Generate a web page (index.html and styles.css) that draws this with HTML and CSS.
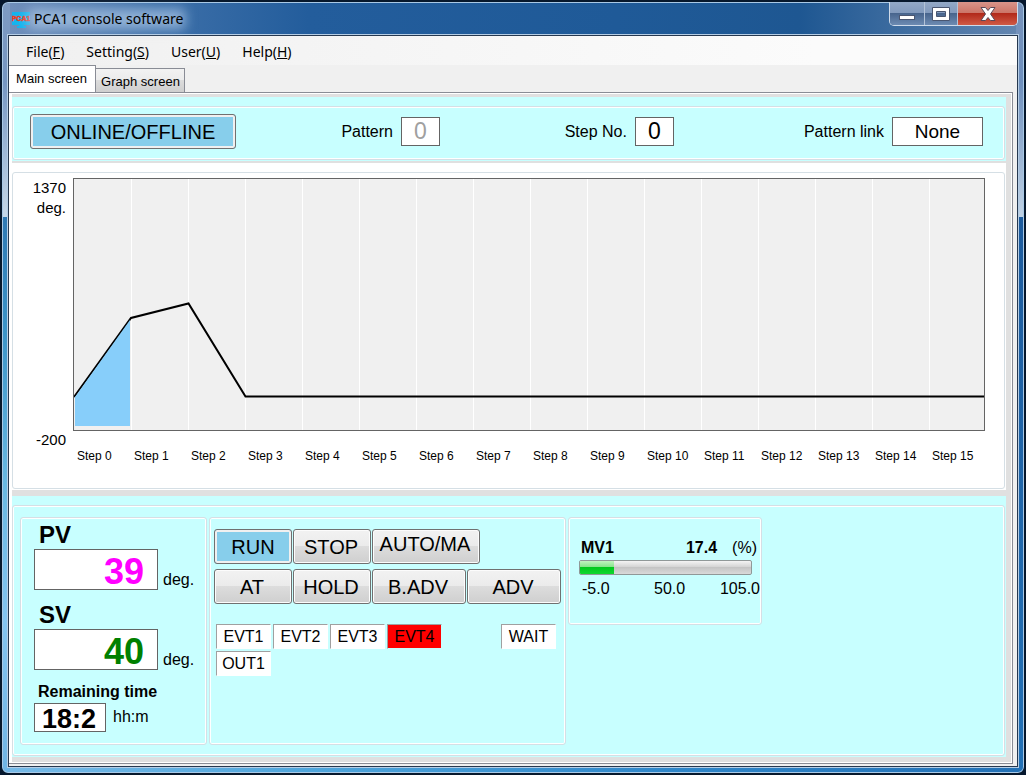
FILE: index.html
```html
<!DOCTYPE html>
<html lang="en">
<head>
<meta charset="utf-8">
<title>PCA1 console software</title>
<link rel="stylesheet" href="styles.css">
</head>
<body>
<div class="window">
  <header class="titlebar">
    <svg class="app-icon" width="18" height="16" viewBox="0 0 18 16" aria-hidden="true">
      <path d="M0 0h18v13H12v1h2v2H5v-2h2v-1H0z" fill="#14b4ee"/>
      <text x="9" y="9" text-anchor="middle" fill="#f03a20" stroke="#f03a20" stroke-width=".5">PCA1</text>
    </svg>
    <h1 class="title">PCA1 console software</h1>
    <div class="captions">
      <button class="cap cap-min" aria-label="Minimize"><svg width="18" height="14" viewBox="0 0 18 14"><rect x="1.500" y="8.500" width="15" height="4" fill="#fff" stroke="#4a5670"/></svg></button>
      <button class="cap cap-max" aria-label="Maximize"><svg width="18" height="14" viewBox="0 0 18 14"><path fill-rule="evenodd" d="M.5.500h17v13H.5zM4.500 4.500v5h9v-5z" fill="#fff" stroke="#4a5670"/></svg></button>
      <button class="cap cap-close" aria-label="Close"><svg width="16" height="14" viewBox="0 0 16 14"><path d="M1 .5h4.500L8 3.500l2.500-3H15L10.500 7l4.500 6.500h-4.500L8 10.500l-2.500 3H1L5.500 7z" fill="#fff" stroke="#5a4a58"/></svg></button>
    </div>
  </header>
  <main class="client">
    <nav class="menu">
      <button>File(<u>F</u>)</button>
      <button>Setting(<u>S</u>)</button>
      <button>User(<u>U</u>)</button>
      <button>Help(<u>H</u>)</button>
    </nav>
    <div class="tabs" role="tablist">
      <button class="tab tab-active" role="tab" aria-selected="true">Main screen</button>
      <button class="tab" role="tab" aria-selected="false">Graph screen</button>
    </div>
    <div class="page">
      <section class="panel panel-top">
        <div class="group status">
          <button class="btn btn-on btn-online">ONLINE/OFFLINE</button>
          <div class="field"><label for="pattern">Pattern</label><input id="pattern" class="box box-small" value="0" disabled></div>
          <div class="field"><label for="step">Step No.</label><input id="step" class="box box-small" value="0" readonly></div>
          <div class="field"><label for="link">Pattern link</label><input id="link" class="box box-link" value="None" readonly></div>
        </div>
      </section>
      <section class="panel panel-chart">
        <div class="group chart">
          <div class="axis"><div><p>1370</p><p>deg.</p></div><p>-200</p></div>
          <svg class="plot" viewBox="0 0 912 253" preserveAspectRatio="none" role="img" aria-label="Pattern profile">
            <rect width="912" height="253" fill="#f0f0f0"/>
            <path d="M58.500 0v253M115.500 0v253M172.500 0v253M229.500 0v253M286.500 0v253M343.500 0v253M400.500 0v253M457.500 0v253M514.500 0v253M571.500 0v253M628.500 0v253M685.500 0v253M742.500 0v253M799.500 0v253M856.500 0v253" stroke="#fff" fill="none"/>
            <path d="M1 219L58 140L115.500 125.500L172.500 218.500H911" fill="none" stroke="#000" stroke-width="2"/>
            <path d="M2 219L57 142V248H2z" fill="#87cefa"/>
            <rect x=".5" y=".5" width="911" height="252" fill="none" stroke="#646464"/>
          </svg>
          <div class="steps">
            <span>Step 0</span><span>Step 1</span><span>Step 2</span><span>Step 3</span><span>Step 4</span><span>Step 5</span><span>Step 6</span><span>Step 7</span><span>Step 8</span><span>Step 9</span><span>Step 10</span><span>Step 11</span><span>Step 12</span><span>Step 13</span><span>Step 14</span><span>Step 15</span>
          </div>
        </div>
      </section>
      <section class="panel panel-bottom">
        <div class="group controls">
          <div class="group values">
            <label class="big" for="pv">PV</label>
            <div class="reading"><input id="pv" class="box box-value pv" value="39" readonly><span>deg.</span></div>
            <label class="big" for="sv">SV</label>
            <div class="reading"><input id="sv" class="box box-value sv" value="40" readonly><span>deg.</span></div>
            <label class="remain" for="rt">Remaining time</label>
            <div class="reading reading-time"><input id="rt" class="box box-time" value="18:2" readonly><span>hh:m</span></div>
          </div>
          <div class="group commands">
            <div class="row"><button class="btn btn-on">RUN</button><button class="btn">STOP</button><button class="btn btn-auto">AUTO/MA</button></div>
            <div class="row"><button class="btn">AT</button><button class="btn">HOLD</button><button class="btn btn-wide">B.ADV</button><button class="btn btn-wide">ADV</button></div>
            <div class="lamps">
              <span class="lamp">EVT1</span><span class="lamp">EVT2</span><span class="lamp">EVT3</span><span class="lamp lamp-on">EVT4</span><span class="lamp lamp-wait">WAIT</span><span class="lamp">OUT1</span>
            </div>
          </div>
          <div class="group output">
            <div class="mv"><b>MV1</b><b class="mv-value">17.4</b><span>(%)</span></div>
            <div class="bar" role="progressbar" aria-label="MV1" aria-valuemin="-5" aria-valuemax="105" aria-valuenow="17.4"><div class="bar-fill" style="width:20%"></div></div>
            <div class="scale"><span>-5.0</span><span>50.0</span><span>105.0</span></div>
          </div>
        </div>
      </section>
    </div>
  </main>
</div>
</body>
</html>
```
FILE: styles.css
```css
* { box-sizing: border-box; }
body { margin: 0; background: #06172e; font: 16px/20px "Liberation Sans", Arial, sans-serif; color: #000; }
p, h1 { margin: 0; }
button, input { font: inherit; color: inherit; }
.window {
  display: flex; flex-direction: column; min-height: 100vh;
  border: 2px solid #07182c; border-radius: 8px;
  padding: 0 6px 6px;
  box-shadow: inset 0 0 0 1px #a9c9e6;
  background:
    linear-gradient(#7e9bc2 0, #7596c2 80px, #c6d8e9 215px, #2f79b4 215px, #3c94c8 330px, #68b8e2 480px, #84c4f0 620px, #6fb4e4) left / 8px 100% no-repeat,
    linear-gradient(#7893bb 0, #6e8fbd 80px, #c0d2e4 215px, #1d5b9d 215px, #2371b6) right / 8px 100% no-repeat,
    linear-gradient(90deg, #78bbe8, #4fa6dc 30%, #2f87ca 65%, #2371b6) bottom / 100% 8px no-repeat,
    linear-gradient(90deg, #7290bb 0, #3e70a9 15%, #235d9c 30%, #1f5a98 60%, #1e5792 78%, #6587b1 100%);
}
.titlebar { display: flex; align-items: flex-start; height: 33px; padding: 0 0 0 4px; }
.app-icon { margin-top: 10px; }
.app-icon text { font: bold 7px "Liberation Sans", sans-serif; }
.title {
  position: relative; z-index: 0; margin-top: 7px; padding-left: 4px;
  font: 14px/20px "Noto Sans", sans-serif;
}
.title::before {
  content: ""; position: absolute; z-index: -1; inset: 0 -2px;
  background: rgba(176, 204, 232, .7); filter: blur(6px);
}
.captions {
  display: flex; height: 24px; margin-left: auto;
  border: 1px solid #cfdbea; border-top: 0; border-radius: 0 0 5px 5px; overflow: hidden;
}
.cap {
  display: flex; align-items: center; justify-content: center; width: 33px; padding: 0;
  border: 0; border-right: 1px solid #b3c3d8;
  background: linear-gradient(#93a9c7, #8199bc 50%, #48658d 50%, #6d8bb2);
}
.cap-min { width: 35px; }
.cap-close { width: 59px; border: 0; background: linear-gradient(#d8948a, #cb7365 50%, #b2291a 50%, #d05a45); }
.client {
  flex: 1; display: flex; flex-direction: column; background: #f0f0f0;
  border: 1px solid #26384f; outline: 1px solid #b5cde5;
}
.menu {
  display: flex; gap: 22px; height: 29px; padding: 5px 17px 4px;
  background: linear-gradient(90deg, #f0f0f0, #fbfbfb 80%);
}
.menu button { padding: 0; border: 0; background: none; font: 14px/22px "Noto Sans", sans-serif; }
.tabs { display: flex; align-items: flex-end; height: 27px; }
.tab {
  height: 24px; padding: 2px 3px 0 4px;
  border: 1px solid #898c95; border-bottom: 0; border-left-width: 0;
  background: linear-gradient(#f2f2f2, #ebebeb 50%, #dcdcdc 50%, #cfcfcf);
  font-size: 13px; line-height: 20px; white-space: nowrap; min-width: 89px;
}
.tab-active { height: 27px; min-width: 87px; padding: 0 7px 1px 6px; background: #fff; }
.page {
  flex: 1; display: flex; flex-direction: column; margin-right: 4px; margin-bottom: 2px;
  padding: 1px; border: 1px solid #898c95; border-left: 0; background: #fff;
}
.panel { padding: 9px 1px 1px 0; margin-left: 2px; background: #c8ffff; border: 0 solid #e0e0e0; border-right-width: 5px; }
.panel-top { border-top-width: 3px; }
.panel-chart { flex: 1; display: flex; background: #fff; border-top-width: 2px; }
.panel-bottom { border-top-width: 6px; border-bottom-width: 5px; }
.group { border: 1px solid #d5dfe5; border-radius: 3px; box-shadow: inset 0 0 0 1px #fff; }
.status {
  display: grid; grid-template-columns: 311fr 223fr 239fr auto; align-items: center;
  height: 54px; padding: 0 21px 3px 17px;
}
.field { display: flex; align-items: center; gap: 8px; }
.box { height: 29px; padding: 0; border: 1px solid #646464; border-radius: 0; background: #fff; text-align: center; }
.box-small { width: 39px; font-size: 23px; }
.box-small:disabled { color: #a0a0a0; }
.box-link { width: 91px; font-size: 19px; }
.btn {
  width: 78px; height: 35px; padding: 0 2px 0 0; border: 1px solid #707070; border-radius: 3px;
  background: linear-gradient(#f2f2f2, #ebebeb 48%, #dddddd 48%, #cfcfcf);
  box-shadow: inset 0 0 0 1px #fcfcfc; font-size: 20px; line-height: 24px;
}
.btn-on { padding: 0; background: #87ceeb; box-shadow: inset 0 0 0 2px #f0f0f0; }
.btn-online { width: 206px; }
.chart {
  flex: 1; display: grid; grid-template: minmax(253px, 1fr) 57px / 60px 1fr;
  padding: 5px 19px 0 0;
}
.axis {
  display: flex; flex-direction: column; justify-content: space-between;
  margin-bottom: -19px; padding-right: 7px; text-align: right; font-size: 15px; line-height: 20px;
}
.plot { width: 100%; height: 100%; min-height: 0; }
.steps {
  grid-column: 2; display: grid; grid-template-columns: repeat(16, 1fr);
  padding-top: 15px; font-size: 12px; line-height: 20px; white-space: nowrap;
}
.steps span { padding-left: 4px; }
.controls { display: flex; align-items: flex-start; gap: 2px; padding: 11px 7px 10px; }
.values { width: 187px; height: 228px; padding: 4px 0 0 13px; }
.values label { display: block; padding-left: 4px; font-weight: bold; }
.values .big { padding-left: 5px; font-size: 24px; line-height: 26px; padding-bottom: 1px; }
.remain { line-height: 20px; }
.reading { display: flex; align-items: flex-end; gap: 5px; margin-bottom: 12px; }
.reading span { line-height: 20px; }
.reading-time { align-items: center; gap: 7px; margin: 0; }
.box-value { width: 124px; height: 41px; padding: 4px 13px 0 0; text-align: right; font-size: 36px; font-weight: bold; }
.pv { color: #f0f; }
.sv { color: green; }
.box-time { width: 72px; font-size: 27px; font-weight: bold; padding: 3px 2px 0 0; margin-top: 1px; }
.commands { width: 357px; height: 228px; padding: 11px 0 0 4px; }
.row { display: flex; gap: 1px; margin-bottom: 5px; }
.btn-auto { width: 108px; padding-bottom: 5px; }
.btn-wide { width: 94px; }
.lamps { display: grid; grid-template-columns: repeat(6, 55px); gap: 2px; padding: 15px 0 0 2px; }
.lamp { height: 25px; border: 1px solid #fff; border-color: #a0a0a0 #fff #fff #a0a0a0; background: #fff; text-align: center; line-height: 23px; }
.lamp-on { background: #f00; border-color: #a0a0a0 #c8ffff #c8ffff #a0a0a0; }
.lamp-wait { grid-column: 6; }
.output { width: 194px; height: 108px; padding: 20px 0 0 10px; }
.mv { display: flex; padding: 0 4px 0 2px; }
.mv-value { margin: 0 15px 0 auto; }
.bar { width: 173px; height: 15px; margin: 2px 0; border: 1px solid #909898; border-radius: 2px; overflow: hidden; background: linear-gradient(#f4f4f4, #d4d4d4 45%, #c4c4c4 50%, #dadada); }
.bar-fill { height: 100%; background: linear-gradient(#c0f4c0, #88e48c 45%, #02c81e 50%, #10d830); }
.scale { display: grid; grid-template-columns: 72px 1fr auto; padding: 0 1px 0 3px; line-height: 24px; }
```
